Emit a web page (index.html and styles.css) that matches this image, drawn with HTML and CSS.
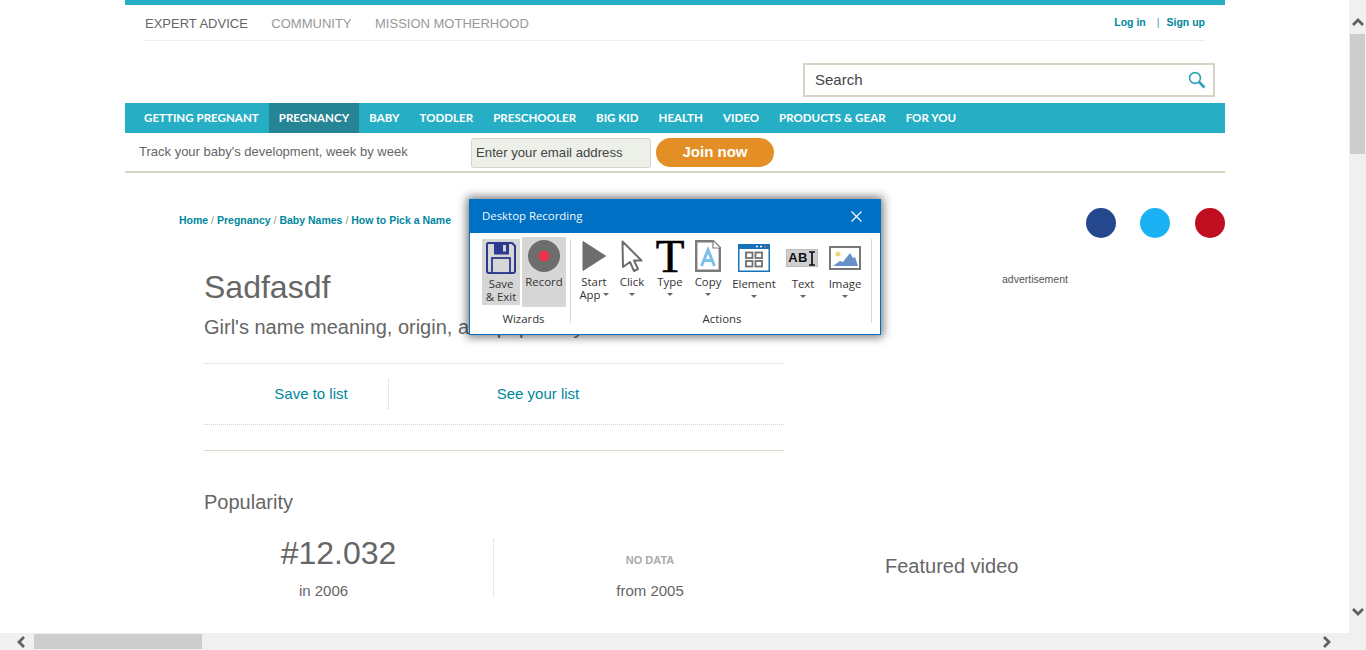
FILE: index.html
```html
<!DOCTYPE html>
<html lang="en">
<head>
<meta charset="utf-8">
<title>Sadfasdf</title>
<link rel="stylesheet" href="styles.css">
</head>
<body>
<div class="viewport">
  <div class="page-area">
    <div class="page">
      <header>
        <div class="topbar"></div>
        <div class="toprow">
          <nav class="sites">
            <a class="site current">EXPERT ADVICE</a>
            <a class="site">COMMUNITY</a>
            <a class="site">MISSION MOTHERHOOD</a>
          </nav>
          <div class="auth"><a>Log in</a><span class="auth-sep">|</span><a>Sign up</a></div>
        </div>
        <div class="searchrow">
          <div class="search">
            <span>Search</span>
            <svg class="search-icon" width="18" height="18" viewBox="0 0 18 18"><circle cx="7" cy="7" r="5.4" fill="none" stroke="#2fa3b8" stroke-width="1.6"/><path d="M11 11l5.5 5.5" stroke="#2fa3b8" stroke-width="2.6"/></svg>
          </div>
        </div>
        <nav class="mainnav">
          <a>GETTING PREGNANT</a>
          <a class="active">PREGNANCY</a>
          <a>BABY</a>
          <a>TODDLER</a>
          <a>PRESCHOOLER</a>
          <a>BIG KID</a>
          <a>HEALTH</a>
          <a>VIDEO</a>
          <a>PRODUCTS &amp; GEAR</a>
          <a>FOR YOU</a>
        </nav>
        <div class="promo">
          <span class="promo-text">Track your baby's development, week by week</span>
          <div class="email">Enter your email address</div>
          <div class="join">Join now</div>
        </div>
      </header>
      <main class="content">
        <div class="crumbrow">
          <div class="crumbs"><a>Home</a> <i>/</i> <a>Pregnancy</a> <i>/</i> <a>Baby Names</a> <i>/</i> <a>How to Pick a Name</a></div>
          <div class="social">
            <span class="dot fb"></span><span class="dot tw"></span><span class="dot pin"></span>
          </div>
        </div>
        <div class="columns">
          <div class="leftcol">
            <h1>Sadfasdf</h1>
            <p class="subtitle">Girl's name meaning, origin, and popularity</p>
            <div class="saverow">
              <div class="savecell"><a>Save to list</a></div>
              <div class="seecell"><a>See your list</a></div>
            </div>
            <div class="rule"></div>
            <h2>Popularity</h2>
            <div class="stats">
              <div class="stat first">
                <div class="rank">#12.032</div>
                <div class="year">in 2006</div>
              </div>
              <div class="stat second">
                <div class="nodata">NO DATA</div>
                <div class="year">from 2005</div>
              </div>
            </div>
          </div>
          <aside class="rightcol">
            <div class="ad">advertisement</div>
            <div class="featured">Featured video</div>
          </aside>
        </div>
      </main>
    </div>

    <section class="dialog">
      <div class="titlebar">
        <span class="title-text">Desktop Recording</span>
        <svg width="11" height="11" viewBox="0 0 11 11"><path d="M0.5 0.5l10 10M10.5 0.5l-10 10" stroke="#fff" stroke-width="1.1"/></svg>
      </div>
      <div class="ribbon">
        <div class="group wizards">
          <div class="group-tools">
            <div class="tool save">
              <svg width="30" height="32" viewBox="0 0 30 32"><path d="M2 1h24l3 3v25a2 2 0 0 1-2 2H3a2 2 0 0 1-2-2V2z" fill="#d6d6d6" stroke="#2b3990" stroke-width="2"/><rect x="8" y="1.500" width="15" height="11" fill="#2b3990"/><rect x="17" y="3" width="3" height="6.500" fill="#d6d6d6"/><rect x="6" y="16" width="18" height="15" fill="#d6d6d6" stroke="#2b3990" stroke-width="1.800"/></svg>
              <span class="label">Save<br>&amp; Exit</span>
            </div>
            <div class="tool record">
              <svg width="32" height="32" viewBox="0 0 32 32"><circle cx="16" cy="16" r="16" fill="#6d6d6d"/><circle cx="16" cy="16" r="5.500" fill="#ec3450"/></svg>
              <span class="label">Record</span>
            </div>
          </div>
          <div class="group-name">Wizards</div>
        </div>
        <div class="group actions">
          <div class="group-tools">
            <div class="tool w38">
              <span class="ico"><svg width="24" height="32" viewBox="0 0 24 32"><path d="M1 1.500L23.500 16 1 30.500z" fill="#6d6d6d" stroke="#6d6d6d" stroke-linejoin="round"/></svg></span>
              <span class="label">Start<br>App<b class="caret inline"></b></span>
            </div>
            <div class="tool w38">
              <span class="ico"><svg width="22" height="32" viewBox="0 0 22 32"><path d="M1.500 1.500L20.500 20.500H13L17 29l-4 2-4-9-7 5z" fill="#fff" stroke="#6d6d6d" stroke-width="2" stroke-linejoin="round"/></svg></span>
              <span class="label">Click</span><b class="caret"></b>
            </div>
            <div class="tool w38">
              <span class="ico"><span class="bigt">T</span></span>
              <span class="label">Type</span><b class="caret"></b>
            </div>
            <div class="tool w38 copy">
              <span class="ico"><svg width="26" height="32" viewBox="0 0 26 32"><path d="M1.200 1.200h17l6.600 6.600v23H1.200z" fill="#fff" stroke="#7a7a7a" stroke-width="2.400"/><path d="M18 1v7h7" fill="#fff" stroke="#7a7a7a" stroke-width="1.200"/><path d="M6.500 26L13 10l6.500 16M9 20.500h8" fill="none" stroke="#7dc0ea" stroke-width="3"/></svg></span>
              <span class="label">Copy</span><b class="caret"></b>
            </div>
            <div class="tool w50 low">
              <span class="ico"><svg width="32" height="28" viewBox="0 0 32 28"><rect width="32" height="28" fill="#1373b8"/><rect x="1.500" y="5" width="29" height="21.500" fill="#fff"/><circle cx="19" cy="2.600" r="1" fill="#fff"/><circle cx="23" cy="2.600" r="1" fill="#fff"/><circle cx="27" cy="2.600" r="1" fill="#f0506a"/><g fill="none" stroke="#6f6f6f" stroke-width="1.800"><rect x="8" y="8.500" width="6.500" height="5.500"/><rect x="17.500" y="8.500" width="6.500" height="5.500"/><rect x="8" y="17" width="6.500" height="5.500"/><rect x="17.500" y="17" width="6.500" height="5.500"/></g></svg></span>
              <span class="label">Element</span><b class="caret"></b>
            </div>
            <div class="tool w48 low">
              <span class="ico"><span class="abi">AB<svg width="8" height="15" viewBox="0 0 8 15"><path d="M1 1h6M4 1v13M1 14h6" fill="none" stroke="#111" stroke-width="1.700"/></svg></span></span>
              <span class="label">Text</span><b class="caret"></b>
            </div>
            <div class="tool w36 low">
              <span class="ico"><svg width="32" height="24" viewBox="0 0 32 24"><rect x="1" y="1" width="30" height="22" fill="#fff" stroke="#777" stroke-width="2"/><circle cx="9" cy="8" r="2.500" fill="#eed77a"/><path d="M4 20l7-5 3 1 7-9 3 5 2-1 3 9z" fill="#6692cc"/></svg></span>
              <span class="label">Image</span><b class="caret"></b>
            </div>
          </div>
          <div class="group-name">Actions</div>
        </div>
      </div>
    </section>
  </div>

  <div class="vscroll">
    <svg width="12" height="8" viewBox="0 0 12 8"><path d="M1 7l5-5 5 5" fill="none" stroke="#606060" stroke-width="2.800"/></svg>
    <div class="vthumb"></div>
    <svg class="push" width="12" height="8" viewBox="0 0 12 8"><path d="M1 1l5 5 5-5" fill="none" stroke="#606060" stroke-width="2.800"/></svg>
  </div>
  <div class="hscroll">
    <svg width="8" height="12" viewBox="0 0 8 12"><path d="M7 1L2 6l5 5" fill="none" stroke="#606060" stroke-width="2.800"/></svg>
    <div class="hthumb"></div>
    <svg class="push" width="8" height="12" viewBox="0 0 8 12"><path d="M1 1l5 5-5 5" fill="none" stroke="#606060" stroke-width="2.800"/></svg>
  </div>
  <div class="corner"></div>
</div>
</body>
</html>
```

FILE: styles.css
```css
* { box-sizing: border-box; }
html, body { margin: 0; padding: 0; height: 100%; overflow: hidden; background: #fff; }
body { font-family: "Liberation Sans", Arial, sans-serif; color: #666; }

.viewport { display: grid; grid-template-columns: 1349px 17px; grid-template-rows: 633px 17px; width: 1366px; height: 650px; }
.page-area { position: relative; overflow: hidden; }
.page { width: 1100px; margin-left: 125px; }

.topbar { height: 5px; background: #26afc4; }
.toprow { display: flex; justify-content: space-between; margin: 0 20px; padding: 10px 0 9px; border-bottom: 1px dotted #dedede; height: 36px; }
.sites { display: flex; gap: 23.500px; padding-top: 1px; font-size: 13px; line-height: 16px; }
.site { color: #999; }
.site.current { color: #666; }
.auth { font-size: 10.500px; font-weight: bold; color: #00879c; line-height: 15px; }
.auth-sep { font-weight: normal; margin: 0 7px 0 11px; color: #3aa0b8; }

.searchrow { display: flex; justify-content: flex-end; padding: 22px 10px 6px 0; }
.search { width: 412px; height: 34px; border: 2px solid #d5d5c5; display: flex; align-items: center; justify-content: space-between; padding: 0 7px 2px 10px; font-size: 15px; color: #444; }
.search-icon { display: block; margin-top: 2px; }

.mainnav { display: flex; height: 30px; padding-left: 9px; background: #26afc4; }
.mainnav a { padding: 0 10px; font-family: Lato, sans-serif; font-size: 11.500px; font-weight: 700; line-height: 30px; color: #fff; letter-spacing: .04px; }
.mainnav a.active { background: #268595; }

.promo { display: flex; align-items: flex-start; height: 40px; padding: 5px 0 0 14px; border-bottom: 2px solid #d5d5c5; }
.promo-text { width: 332px; font-size: 13px; line-height: 27px; color: #666; }
.email { width: 180px; height: 30px; padding-left: 4px; background: #edf0e9; border: 1px solid #d5d5c5; border-radius: 3px; font-size: 13.200px; line-height: 28px; color: #444; }
.join { width: 118px; height: 29px; margin-left: 5px; background: #e38f26; border-radius: 15px; color: #fff; font-size: 15px; font-weight: bold; line-height: 28px; text-align: center; }

.content { padding-left: 54px; }
.crumbrow { display: flex; justify-content: space-between; padding-top: 35px; height: 65px; }
.crumbs { font-size: 10.500px; font-weight: bold; color: #00879c; padding-top: 5px; line-height: 14px; }
.crumbs i { font-style: normal; font-weight: normal; color: #999; }
.social { display: flex; gap: 24px; }
.dot { width: 30px; height: 30px; border-radius: 50%; }
.dot.fb { background: #25478e; }
.dot.tw { background: #1ab2f5; }
.dot.pin { background: #c00d20; margin-left: 1px; }

.columns { display: flex; padding-left: 25px; }
.leftcol { width: 580px; }
h1 { margin: 29px 0 0; font-size: 32px; font-weight: normal; line-height: 40px; }
.subtitle { margin: 8px 0 0; font-size: 20px; line-height: 24px; white-space: nowrap; }
.saverow { display: flex; height: 62px; margin-top: 24px; border-top: 1px dotted #d5d5c5; border-bottom: 1px dotted #d5d5c5; align-items: center; font-size: 15px; color: #00879c; }
.savecell { width: 185px; height: 30px; padding-left: 30px; line-height: 30px; text-align: center; border-right: 1px dotted #d5d5c5; }
.seecell { width: 298px; line-height: 30px; text-align: center; }
.rule { margin-top: 25px; height: 1px; background: #d9d9c6; }
h2 { margin: 39px 0 0; font-size: 20px; font-weight: normal; line-height: 24px; }
.stats { display: flex; margin-top: 25px; height: 58px; }
.stat { text-align: center; }
.stat.first { width: 290px; padding-right: 20px; border-right: 1px dotted #d5d5c5; }
.stat.second { width: 290px; padding-left: 22px; }
.rank { font-size: 32px; line-height: 28px; }
.nodata { padding-top: 14px; font-size: 11px; font-weight: bold; line-height: 14px; color: #aaa; }
.year { margin-top: 16px; font-size: 15px; line-height: 16px; }
.stat.first .year { margin-right: 30px; }
.rightcol { flex: 1; }
.ad { margin: 34px 0 0 218px; font-size: 10.500px; line-height: 14px; color: #555; }
.featured { margin: 268px 0 0 101px; font-size: 20px; line-height: 24px; }

.dialog { position: absolute; left: 469px; top: 199px; width: 412px; height: 136px; background: #fff; border: 1px solid #0070c4; box-shadow: 0 0 9px 2px rgba(0,0,0,.55); font-family: "Open Sans", sans-serif; color: #333; }
.titlebar { display: flex; justify-content: space-between; align-items: center; height: 33px; padding: 0 18px 0 12px; background: #0070c4; color: #f2f7fb; font-size: 11.400px; }
.title-text { margin-top: -2px; }
.ribbon { display: flex; padding: 6px 0 0 12px; }
.group { display: flex; flex-direction: column; height: 84px; }
.group-tools { display: flex; height: 70px; margin-top: -2px; align-items: flex-start; }
.group-name { height: 16px; font-size: 11.400px; line-height: 24px; text-align: center; }
.wizards { width: 89px; border-right: 1px solid #d8d8d8; }
.wizards .group-tools { width: 84px; gap: 2px; }
.actions { width: 301px; padding-left: 4px; border-right: 1px solid #d8d8d8; }
.wizards .group-name { margin-right: 5px; }
.actions .group-name { margin-right: 2px; }

.tool { display: flex; flex-direction: column; align-items: center; font-size: 11.400px; line-height: 13px; text-align: center; flex-shrink: 0; }
.tool.save { width: 38px; height: 66px; margin-top: 2px; padding-top: 3px; background: #d6d6d6; }
.tool.save .label { margin-top: 3px; }
.tool.record { width: 44px; height: 70px; padding-top: 3px; background: #d6d6d6; }
.tool.record .label { margin-top: 3px; }
.tool.w38 { width: 38px; }
.tool.w50 { width: 50px; }
.tool.w48 { width: 48px; padding-right: 2px; }
.tool.w48 .label, .tool.w48 .caret { position: relative; left: 1px; }
.tool.w36 { width: 36px; }
.tool.copy { margin-right: 2px; }
.ico { display: flex; align-items: flex-start; justify-content: center; height: 38px; padding-top: 3px; }
.tool.low .ico { height: 40px; padding-top: 7px; }
.tool.w48.low .ico { padding-top: 12px; }
.tool.w36.low .ico { padding-top: 9px; }
.bigt { font-family: "Liberation Serif", serif; font-size: 47px; font-weight: normal; line-height: 32px; color: #000; -webkit-text-stroke: .6px #000; }
.abi { display: flex; align-items: center; justify-content: center; width: 32px; height: 18px; background: #cfcfcf; border: 1px solid #bbb; font-family: "Liberation Sans", sans-serif; font-size: 13px; font-weight: bold; letter-spacing: .3px; line-height: 16px; color: #111; }
.caret { display: block; width: 0; height: 0; margin-top: 5px; border-left: 3px solid transparent; border-right: 3px solid transparent; border-top: 3px solid #666; }
.caret.inline { display: inline-block; margin: 0 0 2px 2px; vertical-align: middle; }

.vscroll { display: flex; flex-direction: column; align-items: center; padding-top: 18px; background: #f0f0f0; }
.vthumb { width: 15px; height: 120px; margin-top: 8px; background: #cdcdcd; }
.vscroll .push { margin-top: auto; margin-bottom: 17px; }
.hscroll { grid-column: 1; display: flex; align-items: center; padding-left: 17px; background: #f0f0f0; }
.hthumb { width: 168px; height: 15px; margin-left: 9px; background: #cdcdcd; }
.hscroll .push { margin-left: auto; margin-right: 18px; }
.corner { background: #f0f0f0; }
```
